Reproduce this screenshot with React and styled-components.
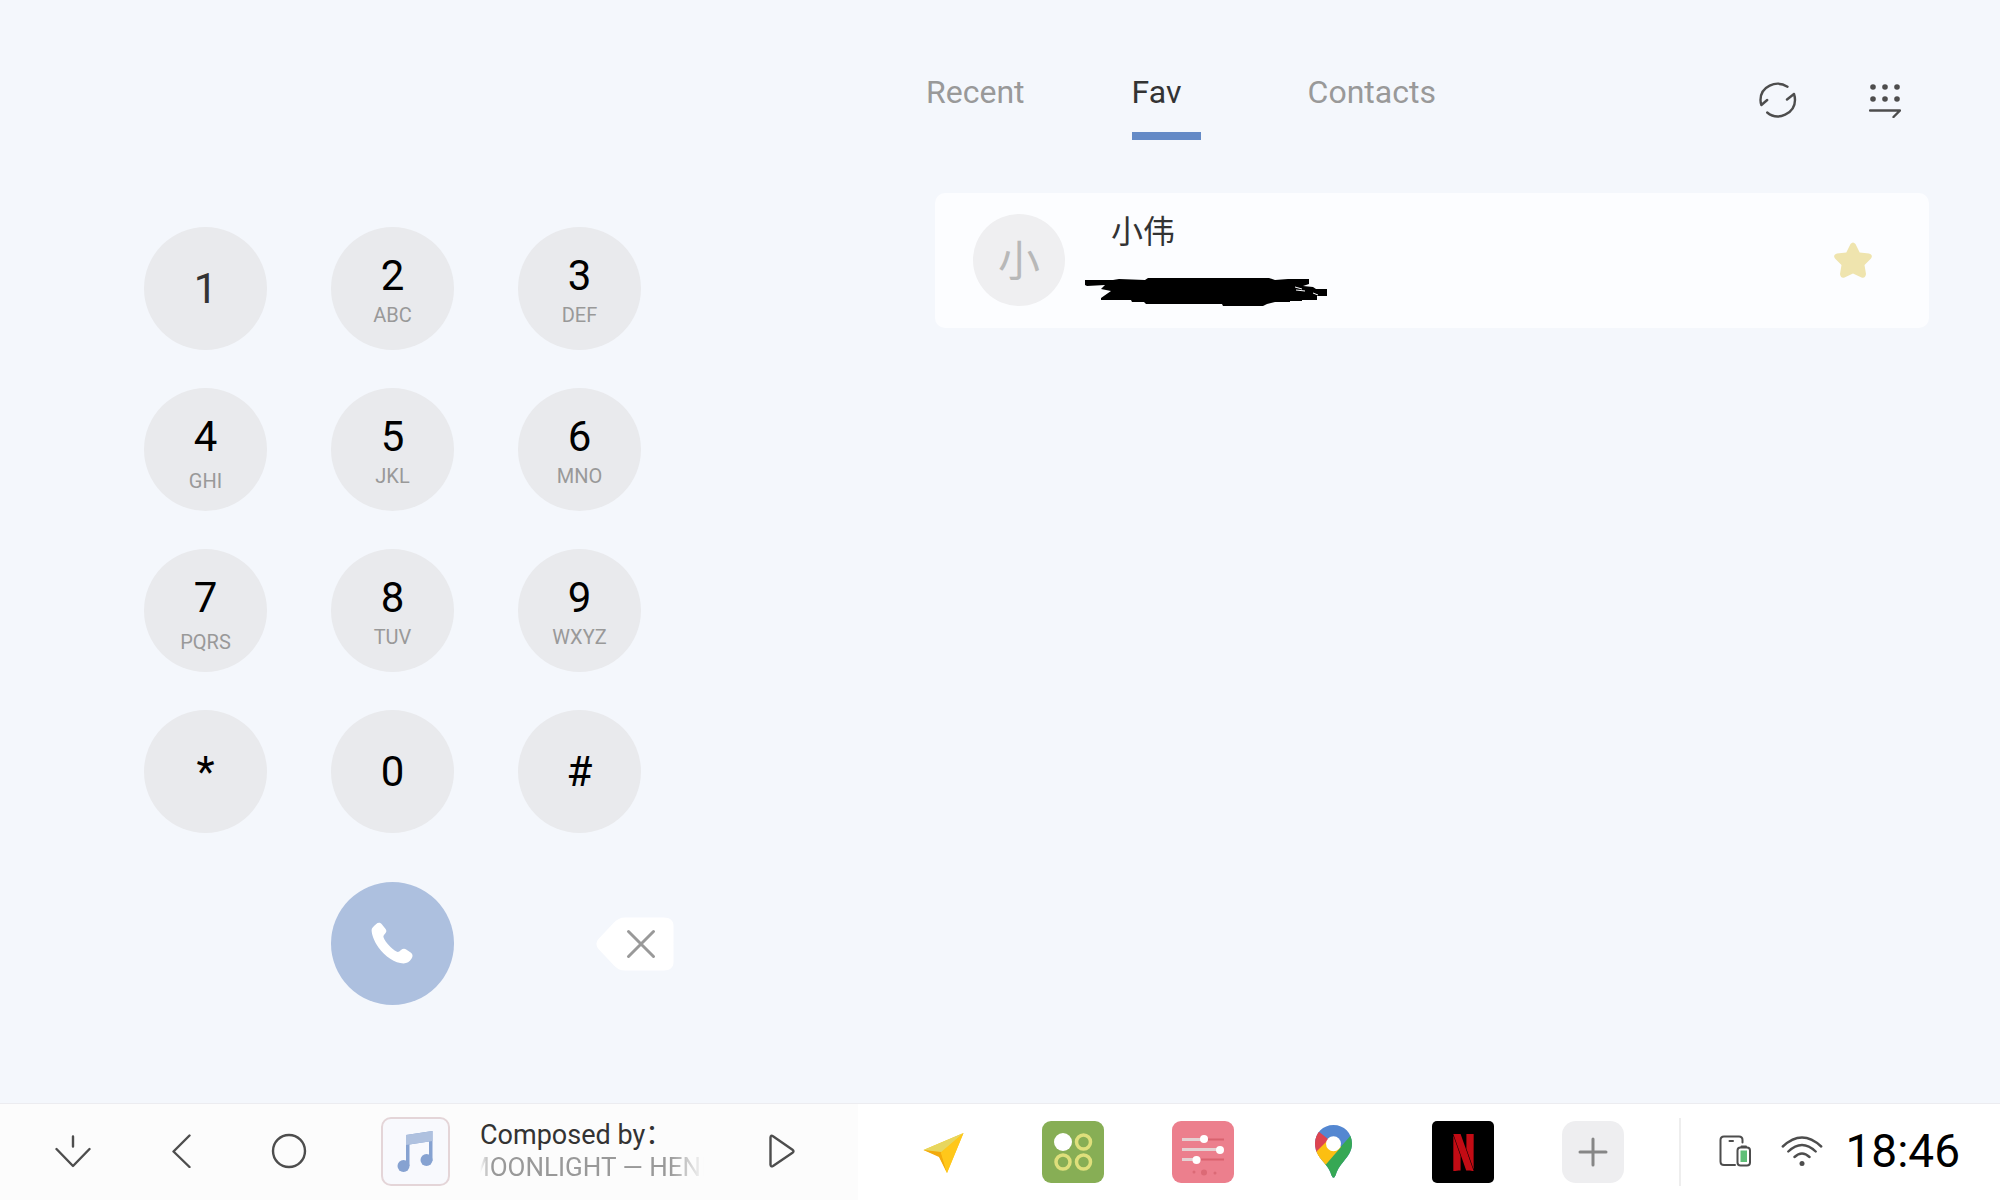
import React, { useState } from 'react';
import styled, { createGlobalStyle } from 'styled-components';
import { SiNetflix } from 'react-icons/si';

const KEYS = [
  { digit: '1', soft: true },
  { digit: '2', letters: 'ABC' },
  { digit: '3', letters: 'DEF' },
  { digit: '4', letters: 'GHI', low: true },
  { digit: '5', letters: 'JKL' },
  { digit: '6', letters: 'MNO' },
  { digit: '7', letters: 'PQRS', low: true },
  { digit: '8', letters: 'TUV' },
  { digit: '9', letters: 'WXYZ' },
  { digit: '*' },
  { digit: '0' },
  { digit: '#' },
];

const TABS = ['Recent', 'Fav', 'Contacts'];

const line = {
  fill: 'none',
  stroke: '#4d4d4d',
  strokeWidth: 2.4,
  strokeLinecap: 'round',
  strokeLinejoin: 'round',
};

const PhoneIcon = () => (
  <svg width="42" height="42" viewBox="0 0 42 42" fill="#fff">
    <path d="M5 2.2 C7 .2 9.500 .4 11 2.400 L14.600 7 C15.800 8.600 15.500 9.800 14.400 11.200 C12.800 13 12 13.800 12.600 15.600 C14 20 21 27.500 25.500 29.600 C27.200 30.300 28.200 29.700 30 28 C31.500 26.600 33.600 26.400 35.200 27.400 L40 30.800 C41.900 32.300 42 34.500 40.600 36.600 C38.500 40 36 41.500 32.600 41.500 C24 41.300 14 34.500 7.500 25.500 C3 19 .6 12.500 .6 8 C.7 6 2.500 4.500 5 2.200 Z" />
  </svg>
);

const BackspaceIcon = () => (
  <svg width="78" height="54" viewBox="0 0 78 54">
    <path
      d="M29 .5 H68 C74 .5 77.500 3.500 77.500 9 V45 C77.500 50.500 74 53.500 68 53.500 H29 C24 53.500 21 51.500 18 48.500 L2.500 32 C-.2 28.500 -.2 25.500 2.500 22 L18 5.500 C21 2.500 24 .5 29 .5 Z"
      fill="#fff"
    />
    <path d="M32.500 14.500 L57.500 39.500 M57.500 14.500 L32.500 39.500" stroke="#999" strokeWidth="3" strokeLinecap="round" />
  </svg>
);

const RefreshIcon = () => (
  <svg width="38" height="36" viewBox="0 0 38 36" {...line}>
    <path d="M28.500 4.700 C17 -2.500 1.500 4.500 1.500 18 Q1.500 20.500 2.400 23 L8.200 18" />
    <path d="M8.200 30.500 C19 39.500 36 31.500 36 18 Q36 15 35 12 L28 17.500" />
  </svg>
);

const KeypadIcon = () => (
  <svg width="32" height="36" viewBox="0 0 32 36">
    {[5, 17].map(y =>
      [4, 16, 28].map(x => <circle key={`${x}-${y}`} cx={x} cy={y} r="2.8" fill="#4d4d4d" />),
    )}
    <path d="M1 28.500 H31 L24.500 35" {...line} />
  </svg>
);

const StarIcon = () => (
  <svg width="38" height="36" viewBox="0 0 38 36">
    <path
      d="M16.500 2 Q19 -1 21.500 2 L25.700 10.500 L35 11.500 Q39.500 13 37 16.500 L30.500 23 L32 32 Q31.500 36.500 27.500 35.500 L19 31.500 L10.500 35.500 Q6.500 36.500 6 32 L7.500 23 L1 16.500 Q-1.500 13 3 11.500 L12.300 10.500 Z"
      fill="#efe4ae"
    />
  </svg>
);

const Scribble = () => (
  <svg width="242" height="29" viewBox="0 0 242 29">
    <path d="M0 2 H28 L34 1 L60 2 L63 0 H184 L190 2 L203 1 H224 V6 L218 8 L228 9 L231 11 H242 V18 H232 V22 H217 V23 H205 V24 H190 L182 26 L178 28 H138 L137 26 H61 L59 24 H47 L46 22 H16 V20 L26 13 L16 11 L20 7 L2 8 L0 7 Z" />
    <path d="M210 9 L217 11 M211 12 L220 13 M228 15 L233 17" stroke="#fcfdff" strokeWidth="1" />
  </svg>
);

const CollapseIcon = () => (
  <svg width="36" height="34" viewBox="0 0 36 34" {...line}>
    <path d="M18 2.500 V12.500 M1.500 15 L18 32 L34.500 15" />
  </svg>
);

const BackIcon = () => (
  <svg width="36" height="34" viewBox="0 0 36 34" {...line}>
    <path d="M26.500 1.500 L10.500 17.500 L26.500 33" />
  </svg>
);

const HomeIcon = () => (
  <svg width="36" height="36" viewBox="0 0 36 36" {...line}>
    <circle cx="18" cy="18" r="16" />
  </svg>
);

const PlayIcon = () => (
  <svg width="26" height="34" viewBox="0 0 26 34" {...line}>
    <path d="M1.500 3.500 Q1.700 1 4 2.200 L23.500 15.700 Q25.500 17.200 23.500 18.700 L4 32 Q1.700 33.200 1.500 30.700 Z" />
  </svg>
);

const MusicIcon = () => (
  <svg width="36" height="42" viewBox="0 0 36 42">
    <path d="M9 5 L35.500 1 V31 H32 V11.500 L12.500 14.500 V36 H9 Z" fill="#86a2d1" />
    <path d="M9 5 L35.500 1 V11 L9 15 Z" fill="#afc1df" />
    <circle cx="6.500" cy="36" r="6" fill="#86a2d1" />
    <circle cx="29.500" cy="30" r="6" fill="#86a2d1" />
  </svg>
);

const ArrowApp = () => (
  <svg width="62" height="62" viewBox="0 0 62 62">
    <path d="M51.500 12 L11.500 29 L27 35 L35 52 Z" fill="#ffc71a" />
    <path d="M51.500 12 L11.500 29 L28 32 Z" fill="#e7d65e" />
    <path d="M11.500 29 L29 31 L35 52 L27 36 Z" fill="#f3aa0c" />
    <path d="M51.500 12 L29 32 L35 52 Z" fill="#ffc71a" />
  </svg>
);

const CirclesApp = () => (
  <svg width="62" height="62" viewBox="0 0 62 62">
    <rect width="62" height="62" rx="9" fill="#87ae55" />
    <circle cx="21" cy="21" r="9" fill="#fff" />
    <g fill="none" stroke="#dedf7b" strokeWidth="3.500">
      <circle cx="41.500" cy="21" r="7" />
      <circle cx="21" cy="41" r="7" />
      <circle cx="41.500" cy="41" r="7" />
    </g>
  </svg>
);

const SlidersApp = () => (
  <svg width="62" height="62" viewBox="0 0 62 62">
    <rect width="62" height="62" rx="9" fill="#ec7f8d" />
    <path d="M10 18.500 H32 M10 28.500 H48 M10 38.500 H25" stroke="#e4d2d3" strokeWidth="3" />
    <path d="M36 18.500 H52 M29 38.500 H52" stroke="#d9626f" strokeWidth="2" />
    <g fill="#fff">
      <circle cx="32" cy="18" r="4" />
      <circle cx="48" cy="29" r="4" />
      <circle cx="24.500" cy="39" r="4" />
    </g>
    <g fill="#dc6a76">
      <circle cx="22" cy="51" r="1.500" />
      <circle cx="32" cy="51.500" r="3" />
      <circle cx="43" cy="52" r="1.500" />
    </g>
  </svg>
);

const MapsApp = () => (
  <svg width="38" height="54" viewBox="-1 0 38 54">
    <clipPath id="pin">
      <path d="M18.500 0 C29 0 37 8 37 18.500 C37 26 33 31 29 36 C24.500 41 22 45.500 20.500 50.500 Q18.500 55 16.500 50.500 C15 46 13.500 43 10 39 C4.500 32.500 0 27 0 18.500 C0 8 8 0 18.500 0 Z" />
    </clipPath>
    <g clipPath="url(#pin)">
      <rect width="37" height="54" fill="#5487d1" />
      <path d="M37 9 L8 42 L16 54 H37 Z" fill="#36a854" />
      <path d="M-2 30 L15 12 L26 22 L10 40.500 L-2 40 Z" fill="#fcbf12" />
      <path d="M3 6 L18 18 L-1 29 L-4 8 Z" fill="#dd4450" />
      <path d="M0 28 L14 14 L19 19 L6 34 Z" fill="#fcbf12" />
    </g>
    <circle cx="18.500" cy="18.700" r="7.500" fill="#fff" />
  </svg>
);

const PlusIcon = () => (
  <svg width="30" height="30" viewBox="0 0 30 30" stroke="#868686" strokeWidth="3" strokeLinecap="round">
    <path d="M15 2 V28 M2 15 H28" />
  </svg>
);

const PhoneBatteryIcon = () => (
  <svg width="32" height="32" viewBox="0 0 32 32">
    <g {...line} strokeWidth="2">
      <path d="M23.500 7.500 V5 Q23.500 1.500 20 1.500 H5 Q1.500 1.500 1.500 5 V26.500 Q1.500 30 5 30 H16" />
      <path d="M10.500 6 H14" />
      <rect x="18.500" y="12.500" width="12.500" height="18" rx="3" />
      <path d="M22.500 11.500 H27" />
    </g>
    <rect x="21.500" y="15.500" width="6.500" height="11.500" fill="#5fbf77" />
  </svg>
);

const WifiIcon = () => (
  <svg width="42" height="32" viewBox="0 0 42 32" {...line}>
    <path d="M1.800 11.500 Q21 -6.500 40.200 11.500 M7.300 16.500 Q21 3.500 34.700 16.500 M13.500 22 Q21 15 28.500 22" />
    <circle cx="21" cy="28.500" r="2.500" fill="#4d4d4d" stroke="none" />
  </svg>
);

const App = () => {
  const [tab, setTab] = useState('Fav');

  return (
    <>
      <GlobalStyle />
      <Page>
        <Main>
          <Dialer>
            <Keypad>
              {KEYS.map(({ digit, letters, soft, low }) => (
                <Key key={digit}>
                  <Digit $soft={soft}>{digit}</Digit>
                  {letters && <Letters $low={low}>{letters}</Letters>}
                </Key>
              ))}
            </Keypad>
            <Actions>
              <CallButton aria-label="Call">
                <PhoneIcon />
              </CallButton>
              <EraseButton aria-label="Delete digit">
                <BackspaceIcon />
              </EraseButton>
            </Actions>
          </Dialer>

          <Phonebook>
            <Header>
              <TabList role="tablist">
                {TABS.map(name => (
                  <Tab
                    key={name}
                    role="tab"
                    aria-selected={tab === name}
                    $active={tab === name}
                    onClick={() => setTab(name)}
                  >
                    {name}
                  </Tab>
                ))}
              </TabList>
              <Tools>
                <IconButton aria-label="Sync contacts">
                  <RefreshIcon />
                </IconButton>
                <IconButton aria-label="Hide keypad">
                  <KeypadIcon />
                </IconButton>
              </Tools>
            </Header>
            <Contact>
              <Avatar>小</Avatar>
              <Info>
                <Name>小伟</Name>
                <Number>
                  <Scribble />
                </Number>
              </Info>
              <IconButton aria-label="Favourite">
                <StarIcon />
              </IconButton>
            </Contact>
          </Phonebook>
        </Main>

        <Bar>
          <Controls>
            <Nav>
              <NavButton aria-label="Collapse">
                <CollapseIcon />
              </NavButton>
              <NavButton aria-label="Back">
                <BackIcon />
              </NavButton>
              <NavButton aria-label="Home">
                <HomeIcon />
              </NavButton>
            </Nav>
            <Cover>
              <MusicIcon />
            </Cover>
            <Track>
              <Title>Composed by：</Title>
              <Marquee>MOONLIGHT — HENRY</Marquee>
            </Track>
            <NavButton aria-label="Play">
              <PlayIcon />
            </NavButton>
          </Controls>
          <Dock>
            <AppButton aria-label="Navigation">
              <ArrowApp />
            </AppButton>
            <AppButton aria-label="Apps">
              <CirclesApp />
            </AppButton>
            <AppButton aria-label="Equalizer">
              <SlidersApp />
            </AppButton>
            <AppButton aria-label="Maps">
              <MapsApp />
            </AppButton>
            <AppButton aria-label="Netflix" $bg="#000" $radius="5px">
              <SiNetflix size={37} color="#c30b14" />
            </AppButton>
            <AppButton aria-label="Add app" $bg="#eeeef0" $radius="14px">
              <PlusIcon />
            </AppButton>
          </Dock>
          <Status>
            <PhoneBatteryIcon />
            <WifiIcon />
            <Clock>18:46</Clock>
          </Status>
        </Bar>
      </Page>
    </>
  );
};

const GlobalStyle = createGlobalStyle`
  * {
    box-sizing: border-box;
  }

  body {
    margin: 0;
    background-color: #f4f7fc;
    font-family: Roboto, 'Noto Sans CJK SC', sans-serif;
  }

  button {
    padding: 0;
    border: 0;
    background: none;
    font-family: inherit;
    cursor: pointer;
  }

  svg {
    display: block;
    flex-shrink: 0;
  }
`;

const Page = styled.div`
  display: flex;
  flex-direction: column;
  min-height: 100vh;
`;

const Main = styled.main`
  display: flex;
  flex: 1;
`;

const Dialer = styled.section`
  flex: 0 0 46.3%;
  padding: 227px 0 98px 144px;
`;

const Keypad = styled.div`
  display: grid;
  grid-template-columns: repeat(3, 123px);
  gap: 38px 64px;
`;

const Key = styled.button`
  display: flex;
  flex-direction: column;
  align-items: center;
  justify-content: center;
  height: 123px;
  border-radius: 50%;
  background-color: #e9eaed;

  &:active {
    background-color: #dcdee3;
  }
`;

const Digit = styled.span`
  color: ${props => (props.$soft ? '#333' : '#000')};
  font-size: 42px;
  line-height: 42px;
`;

const Letters = styled.span`
  margin-top: ${props => (props.$low ? '11px' : '6px')};
  margin-bottom: ${props => (props.$low ? '-9px' : '-4px')};
  color: #999;
  font-size: 20px;
  line-height: 24px;
`;

const Actions = styled.div`
  display: grid;
  grid-template-columns: repeat(3, 123px);
  column-gap: 64px;
  align-items: center;
  margin-top: 49px;
`;

const CallButton = styled.button`
  display: flex;
  grid-column: 2;
  align-items: center;
  justify-content: center;
  height: 123px;
  padding: 0 2px 2px 0;
  border-radius: 50%;
  background-color: #adc0df;
`;

const EraseButton = styled.button`
  margin-left: 78px;
`;

const Phonebook = styled.section`
  flex: 1;
  padding: 73px 71px 0 0;
`;

const Header = styled.header`
  display: flex;
  justify-content: space-between;
  padding-right: 28px;
`;

const TabList = styled.div`
  display: flex;
  gap: 107px;
`;

const Tab = styled.button`
  min-width: 69px;
  padding-bottom: 21px;
  border-bottom: 8px solid ${props => (props.$active ? '#648ac6' : 'transparent')};
  color: ${props => (props.$active ? '#333' : '#999')};
  font-size: 32px;
  line-height: 38px;
  text-align: left;
`;

const Tools = styled.div`
  display: flex;
  align-items: flex-start;
  gap: 72px;
  padding-top: 9px;
`;

const IconButton = styled.button`
  flex-shrink: 0;
`;

const Contact = styled.article`
  display: flex;
  align-items: center;
  min-height: 135px;
  margin: 53px 0 0 9px;
  padding: 0 57px 2px 38px;
  border-radius: 10px;
  background-color: #fcfdff;
`;

const Avatar = styled.div`
  display: flex;
  align-items: center;
  justify-content: center;
  width: 92px;
  height: 92px;
  padding-top: 4px;
  border-radius: 50%;
  background-color: #efeff1;
  color: #b8b8b8;
  font-size: 42px;
  line-height: 42px;
`;

const Info = styled.div`
  flex: 1;
  margin-left: 46px;
`;

const Name = styled.div`
  color: #333;
  font-size: 32px;
  line-height: 40px;
`;

const Number = styled.div`
  margin: 26px 0 0 -26px;
`;

const Bar = styled.footer`
  display: flex;
  height: 97px;
  border-top: 1px solid #ececf0;
  background-color: #fff;
`;

const Controls = styled.div`
  display: flex;
  flex: 0 0 42.9%;
  align-items: center;
  padding: 0 0 2px 47px;
  background-color: #fcfcfc;
`;

const Nav = styled.nav`
  display: flex;
  gap: 56px;
`;

const NavButton = styled.button`
  display: flex;
  align-items: center;
  justify-content: center;
  width: 52px;
  height: 52px;
`;

const Cover = styled.div`
  display: flex;
  align-items: center;
  justify-content: center;
  width: 69px;
  height: 69px;
  margin: 0 30px 0 66px;
  padding-right: 2px;
  border: 2px solid #e4d5d8;
  border-radius: 10px;
  background-color: #f8f9fd;
`;

const Track = styled.div`
  width: 225px;
  margin-right: 51px;
  overflow: hidden;
  font-size: 27px;
  line-height: 32px;
  white-space: nowrap;
`;

const Title = styled.div`
  color: #333;
`;

const Marquee = styled.div`
  overflow: hidden;
  color: #999;
  font-size: 26px;
  text-indent: -13px;
  mask-image: linear-gradient(to right, transparent, #000 12px, #000 190px, transparent 224px);
`;

const Dock = styled.div`
  display: flex;
  align-items: center;
  gap: 68px;
  padding-left: 54px;
`;

const AppButton = styled.button`
  display: flex;
  align-items: center;
  justify-content: center;
  width: 62px;
  height: 62px;
  border-radius: ${props => props.$radius || 0};
  background-color: ${props => props.$bg || 'transparent'};
`;

const Status = styled.div`
  display: flex;
  align-items: center;
  align-self: center;
  gap: 30px;
  height: 68px;
  margin-left: auto;
  padding: 0 40px 2px 38px;
  border-left: 2px solid #eee;
`;

const Clock = styled.time`
  margin-left: -8px;
  color: #000;
  font-size: 46px;
  line-height: 54px;
`;

export default App;
